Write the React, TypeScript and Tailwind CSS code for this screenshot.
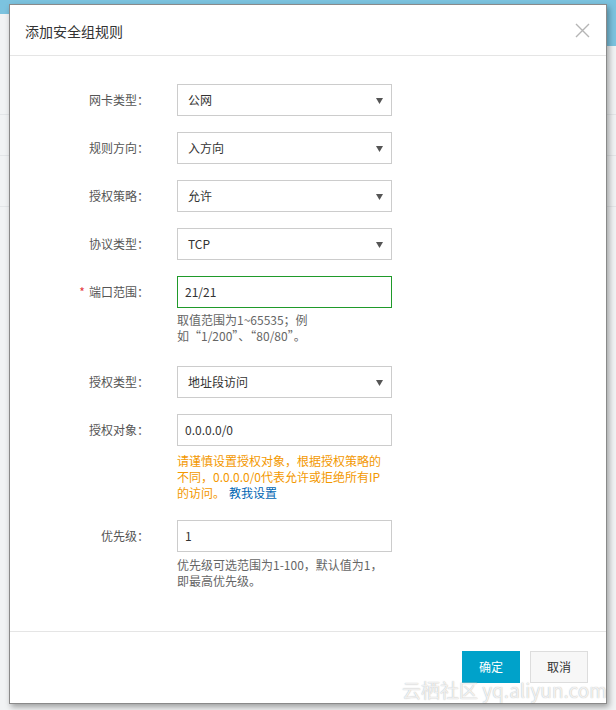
import React from "react";

const font = { fontFamily: '"Noto Sans CJK SC", "Noto Sans", sans-serif' };

function Arrow() {
  return (
    <svg width="7" height="6" viewBox="0 0 7 6" className="absolute right-[8px] top-[13px]">
      <polygon points="0,0 7,0 3.5,6" fill="#555" />
    </svg>
  );
}

function Row({ label, children, required, mt }: { label: string; children: React.ReactNode; required?: boolean; mt: string }) {
  return (
    <div className={`flex ${mt}`}>
      <div className="w-[167px] shrink-0 h-[32px] flex items-center justify-end pr-[28px] text-[12px] text-[#555]">
        {required && <span className="text-[#e4393c] mr-[4px]">*</span>}
        {label}：
      </div>
      <div className="w-[215px]">{children}</div>
    </div>
  );
}

function Select({ value }: { value: string }) {
  return (
    <div className="relative h-[32px] border border-[#cccccc] bg-white flex items-center pl-[10px] text-[12px] text-[#333]">
      {value}
      <Arrow />
    </div>
  );
}

function Input({ value, green }: { value: string; green?: boolean }) {
  return (
    <div className={`h-[32px] border ${green ? "border-[#1f9a2a]" : "border-[#cccccc]"} bg-white flex items-center pl-[7px] text-[12px] text-[#333]`}>
      {value}
    </div>
  );
}

export default function App() {
  return (
    <div className="relative w-[616px] h-[710px] overflow-hidden bg-[#f1f3f4]" style={font}>
      <div className="h-[14px] bg-[#7cc3df]"></div>
      <div className="absolute right-0 top-0 w-[12px] h-[46px] bg-[#7cc3df]"></div>
      <div className="h-[1px] bg-[#e3e6e8] mt-[100px]"></div>
      <div className="h-[1px] bg-[#e3e6e8] mt-[40px]"></div>
      <div className="h-[1px] bg-[#e3e6e8] mt-[50px]"></div>

      <div className="absolute left-[9px] top-[4px] w-[598px] h-[700px] bg-white border border-[#8a8a8a] shadow-[2px_3px_6px_rgba(0,0,0,0.35)] flex flex-col">
        <div className="h-[51px] shrink-0 border-b border-[#e5e5e5] flex items-center justify-between pl-[15px] pr-[16px]">
          <div className="text-[14px] text-[#333] pt-[2px]">添加安全组规则</div>
          <svg width="15" height="15" viewBox="0 0 15 15" className="mt-[1px]">
            <path d="M1 1L14 14M14 1L1 14" stroke="#b5b5b5" strokeWidth="1.4" />
          </svg>
        </div>

        <div className="flex-1 pt-[28px]">
          <Row label="网卡类型" mt="mt-0"><Select value="公网" /></Row>
          <Row label="规则方向" mt="mt-[16px]"><Select value="入方向" /></Row>
          <Row label="授权策略" mt="mt-[16px]"><Select value="允许" /></Row>
          <Row label="协议类型" mt="mt-[16px]"><Select value="TCP" /></Row>
          <Row label="端口范围" required mt="mt-[16px]">
            <Input value="21/21" green />
            <div className="text-[12px] leading-[16px] text-[#666] mt-[4px] pr-[40px]">
              取值范围为1~65535；例如“1/200”、“80/80”。
            </div>
          </Row>
          <Row label="授权类型" mt="mt-[22px]"><Select value="地址段访问" /></Row>
          <Row label="授权对象" mt="mt-[16px]">
            <Input value="0.0.0.0/0" />
            <div className="text-[12px] leading-[16px] text-[#f39800] mt-[7px]">
              请谨慎设置授权对象，根据授权策略的不同，0.0.0.0/0代表允许或拒绝所有IP的访问。<span className="text-[#0066b3] ml-[4px]">教我设置</span>
            </div>
          </Row>
          <Row label="优先级" mt="mt-[19px]">
            <Input value="1" />
            <div className="text-[12px] leading-[16px] text-[#666] mt-[5px]">
              优先级可选范围为1-100，默认值为1，即最高优先级。
            </div>
          </Row>
        </div>

        <div className="h-[72px] shrink-0 border-t border-[#e5e5e5] flex justify-end items-start pt-[19px] pr-[18px] gap-[10px]">
          <div className="w-[58px] h-[32px] bg-[#00a2ca] text-white text-[12px] flex items-center justify-center">确定</div>
          <div className="w-[58px] h-[32px] bg-[#f7f7f7] border border-[#dddddd] text-[#333] text-[12px] flex items-center justify-center">取消</div>
        </div>
      </div>

      <div
        className="absolute left-[402px] top-[676px] whitespace-nowrap text-[19px] leading-[28px] text-white/80"
        style={{ textShadow: "0 0 1px rgba(0,0,0,0.35)" }}
      >
        云栖社区 yq.aliyun.com
      </div>
    </div>
  );
}
